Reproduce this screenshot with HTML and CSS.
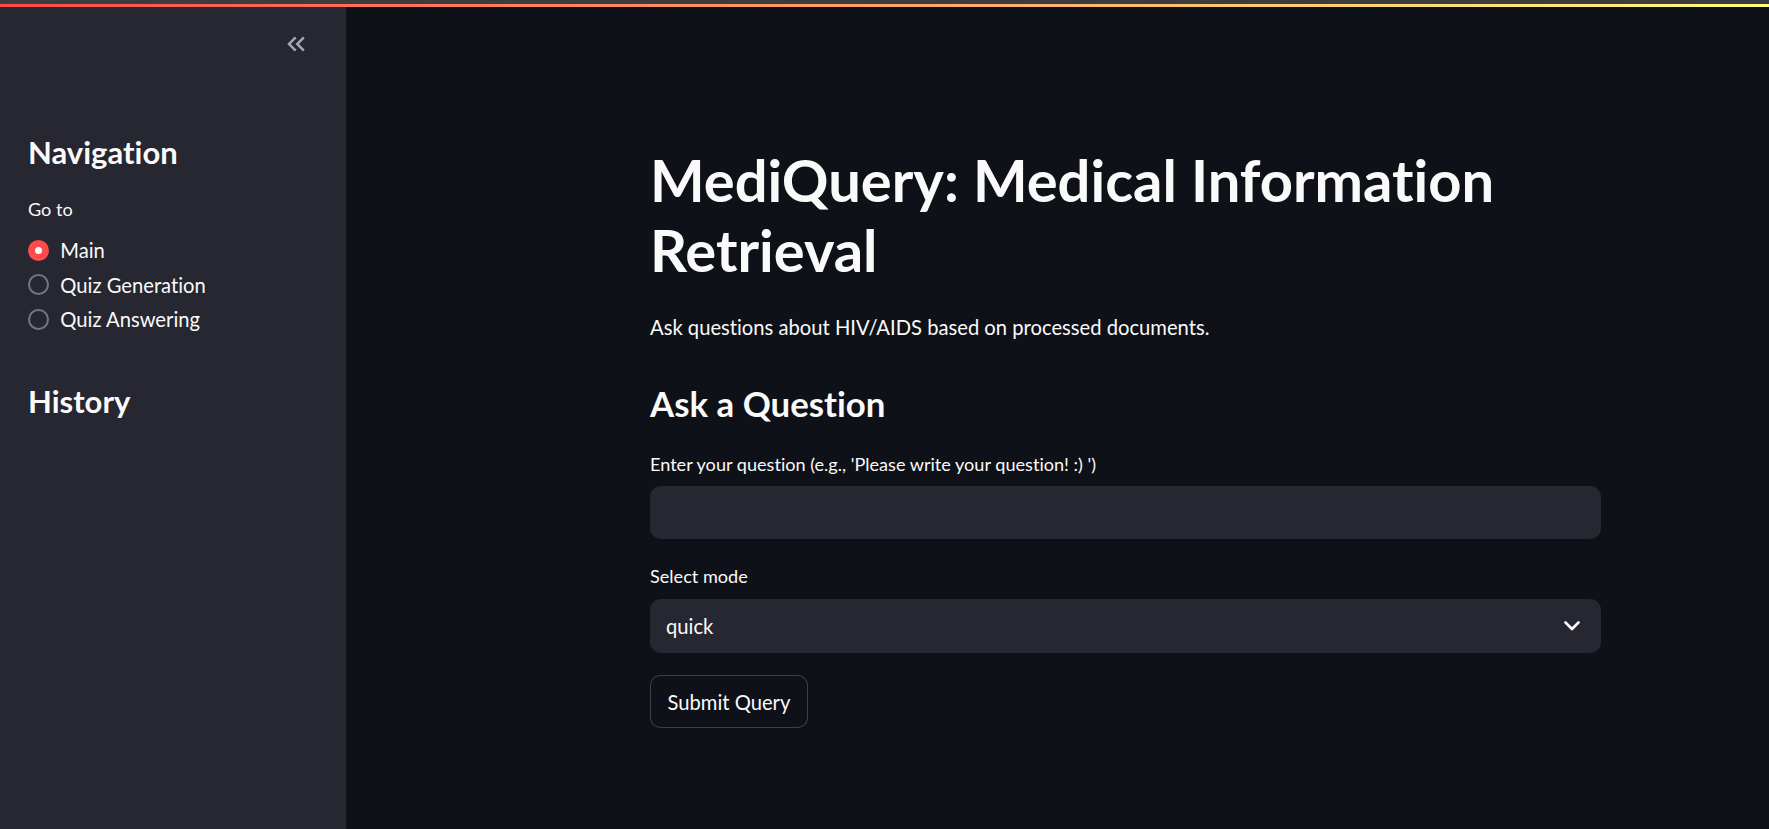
FILE: index.html
```html
<!DOCTYPE html>
<html lang="en">
<head>
<meta charset="utf-8">
<title>MediQuery</title>
<link rel="stylesheet" href="styles.css">
</head>
<body>
<div class="topbar"><div class="topbar-gray"></div><div class="topbar-grad"></div></div>
<div class="app">
  <aside class="sidebar">
    <div class="sb-head">
      <button class="collapse" aria-label="Collapse sidebar">
        <svg viewBox="0 0 24 24" width="30" height="30"><path fill="currentColor" d="M17.59 18L19 16.59 14.42 12 19 7.41 17.59 6l-6 6z M11 18l1.41-1.41L7.83 12l4.58-4.59L11 6l-6 6z"/></svg>
      </button>
    </div>
    <h2 class="sb-title">Navigation</h2>
    <div class="sb-label">Go to</div>
    <div class="radio-group">
      <div class="radio checked"><span class="dot"></span><span>Main</span></div>
      <div class="radio"><span class="dot"></span><span>Quiz Generation</span></div>
      <div class="radio"><span class="dot"></span><span>Quiz Answering</span></div>
    </div>
    <h2 class="sb-title history">History</h2>
  </aside>
  <main class="main">
    <div class="block">
      <h1 class="title">MediQuery: Medical Information Retrieval</h1>
      <p class="desc">Ask questions about HIV/AIDS based on processed documents.</p>
      <h3 class="subheader">Ask a Question</h3>
      <div class="field-label first">Enter your question (e.g., 'Please write your question! :) ')</div>
      <div class="text-input"></div>
      <div class="field-label second">Select mode</div>
      <div class="select">
        <span>quick</span>
        <svg width="16" height="10" viewBox="0 0 16 10"><polyline points="1.5,1.5 8,8 14.5,1.5" fill="none" stroke="#fafafa" stroke-width="2.6" stroke-linecap="round" stroke-linejoin="round"/></svg>
      </div>
      <button class="btn">Submit Query</button>
    </div>
  </main>
</div>
</body>
</html>
```

FILE: styles.css
```css
* { box-sizing: border-box; }
html, body {
  margin: 0;
  padding: 0;
  height: 100%;
  background: #0e1117;
  color: #fafafa;
  font-family: "Lato", "Noto Sans", sans-serif;
  font-variant-ligatures: none;
  overflow: hidden;
}
.topbar { height: 7px; display: flex; flex-direction: column; }
.topbar-gray { height: 4px; background: #3c3c3e; }
.topbar-grad { height: 3px; background: linear-gradient(90deg, #ff4b4b, #fffd80); }

.app { display: flex; height: calc(100% - 7px); }

.sidebar {
  width: 346px;
  flex: 0 0 346px;
  background: #262730;
  padding: 22px 35px 0 28px;
}
.sb-head { display: flex; justify-content: flex-end; height: 30px; }
.collapse {
  background: none; border: 0; padding: 0; margin: 0;
  width: 30px; height: 30px; color: #a3a8b8; display: block;
}
.collapse svg { display: block; }
.sb-title {
  margin: 0;
  font-size: 31px;
  line-height: 38.4px;
  font-weight: 700;
  color: #fafafa;
}
.sb-head + .sb-title { margin-top: 73.5px; }
.sb-label {
  margin-top: 23.9px;
  font-size: 18.1px;
  line-height: 29.87px;
}
.radio-group { margin-top: 8px; display: flex; flex-direction: column; }
.radio {
  display: flex;
  align-items: center;
  height: 34.67px;
  font-size: 20.2px;
  gap: 11.3px;
}
.dot {
  width: 21px; height: 21px;
  border-radius: 50%;
  border: 2px solid #74767e;
  flex: 0 0 21px;
  display: flex; align-items: center; justify-content: center;
}
.radio.checked .dot { background: #ff4b4b; border-color: #ff4b4b; }
.radio.checked .dot::after {
  content: ""; width: 7px; height: 7px; border-radius: 50%; background: #fafafa;
}
.history { margin-top: 45px; }

.main { flex: 1; padding-left: 304px; }
.block { width: 951px; padding-top: 137.5px; }
.title {
  margin: 0;
  font-size: 57.9px;
  line-height: 70.4px;
  font-weight: 700;
}
.desc {
  margin: 24.3px 0 0;
  font-size: 20.2px;
  line-height: 34.13px;
}
.subheader {
  margin: 38.7px 0 0;
  font-size: 34.8px;
  line-height: 44.8px;
  font-weight: 700;
}
.field-label {
  font-size: 18.1px;
  line-height: 29.87px;
  margin-bottom: 6.8px;
}
.field-label.first { margin-top: 22.4px; }
.field-label.second { margin-top: 23.2px; }
.text-input {
  height: 53px;
  background: #262730;
  border-radius: 10.67px;
}
.select {
  height: 54px;
  background: #262730;
  border-radius: 10.67px;
  display: flex;
  align-items: center;
  justify-content: space-between;
  padding: 0 21px 0 16px;
  font-size: 20.2px;
}
.btn {
  margin-top: 22px;
  height: 53px;
  padding: 0 16.5px;
  background: #0e1117;
  color: #fafafa;
  border: 1px solid rgba(250, 250, 250, 0.2);
  border-radius: 10.67px;
  font-family: inherit;
  font-size: 20.2px;
  font-variant-ligatures: none;
}
```
